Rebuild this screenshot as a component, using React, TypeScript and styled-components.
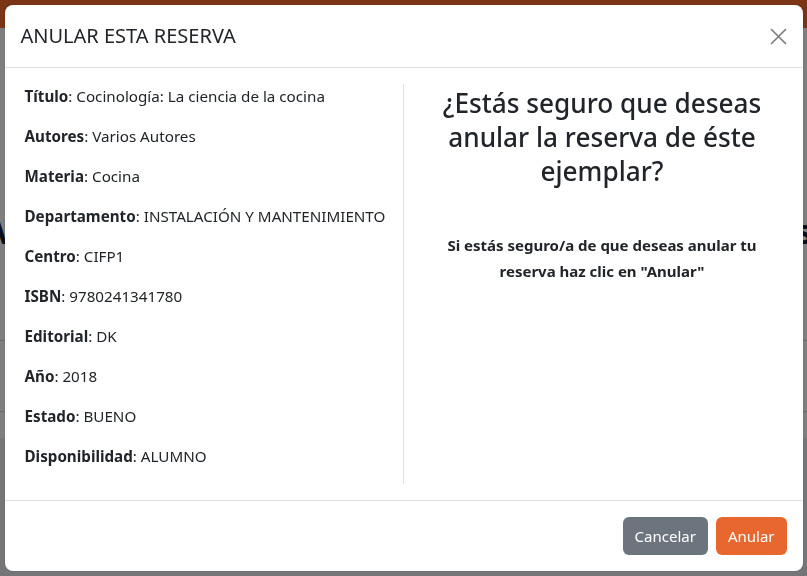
import React from "react";
import styled, { createGlobalStyle } from "styled-components";

const GlobalStyle = createGlobalStyle`
  html, body {
    margin: 0;
    height: 100%;
  }
  body {
    font-family: "Noto Sans", "Open Sans", sans-serif;
    color: #212529;
    background: #ffffff;
    overflow: hidden;
  }
`;

const Page = styled.div`
  height: 576px;
  display: flex;
  flex-direction: column;
`;

const NavBar = styled.div`
  height: 28px;
  background: #f4682c;
`;

const PageBody = styled.div`
  flex: 1;
  display: flex;
  flex-direction: column;
  padding: 180px 0 0;
`;

const PageTitle = styled.div`
  display: flex;
  justify-content: space-between;
  font-size: 34px;
  font-weight: 700;
  color: #0e1b36;
  margin: 0 -6px;
`;

const PageLine = styled.div<{ $top: number }>`
  margin-top: ${(p) => p.$top}px;
  border-top: 1px solid #d0d4d8;
`;

const PageFooter = styled.div`
  margin-top: auto;
  height: 138px;
  background: #e9ecef;
`;

const Backdrop = styled.div`
  position: fixed;
  inset: 0;
  background: rgba(0, 0, 0, 0.5);
  display: flex;
  justify-content: center;
  align-items: flex-start;
  padding-top: 5px;
`;

const Modal = styled.div`
  width: 798px;
  background: #ffffff;
  border-radius: 8px;
  display: flex;
  flex-direction: column;
  box-shadow: 0 0 2px rgba(0, 0, 0, 0.2);
`;

const Header = styled.div`
  display: flex;
  align-items: center;
  justify-content: space-between;
  padding: 16px;
  border-bottom: 1px solid #dee2e6;
`;

const Title = styled.h5`
  margin: 0;
  font-size: 20px;
  line-height: 30px;
  font-weight: 400;
`;

const CloseButton = styled.button`
  width: 24px;
  height: 24px;
  padding: 0;
  border: none;
  background: transparent;
  display: flex;
  align-items: center;
  justify-content: center;
  margin-right: -4px;
  cursor: pointer;
`;

const Body = styled.div`
  padding: 16px;
  display: grid;
  grid-template-columns: 1fr 1fr;
`;

const InfoColumn = styled.div`
  border-right: 1px solid #dee2e6;
  padding-left: 4px;
`;

const InfoRow = styled.p`
  margin: 0 0 16px;
  font-size: 15.2px;
  line-height: 24px;
  white-space: nowrap;
`;

const Label = styled.b`
  font-weight: 700;
`;

const ConfirmColumn = styled.div`
  text-align: center;
  padding: 0 12px 0 26px;
`;

const Question = styled.h2`
  margin: 2px 0 0;
  font-size: 26.2px;
  line-height: 34px;
  font-weight: 500;
`;

const Hint = styled.p`
  margin: 44px 0 0;
  font-size: 15px;
  line-height: 26px;
  font-weight: 700;
`;

const Footer = styled.div`
  display: flex;
  justify-content: flex-end;
  gap: 8px;
  padding: 16px;
  border-top: 1px solid #dee2e6;
`;

const Button = styled.button<{ $variant: "secondary" | "danger" }>`
  height: 38px;
  padding: 0 12px;
  border: none;
  border-radius: 6px;
  font-family: inherit;
  font-size: 15px;
  color: #ffffff;
  background: ${(p) => (p.$variant === "secondary" ? "#6c757d" : "#e7672f")};
  cursor: pointer;
`;

const book: [string, string][] = [
  ["Título", "Cocinología: La ciencia de la cocina"],
  ["Autores", "Varios Autores"],
  ["Materia", "Cocina"],
  ["Departamento", "INSTALACIÓN Y MANTENIMIENTO"],
  ["Centro", "CIFP1"],
  ["ISBN", "9780241341780"],
  ["Editorial", "DK"],
  ["Año", "2018"],
  ["Estado", "BUENO"],
  ["Disponibilidad", "ALUMNO"],
];

export default function App() {
  return (
    <>
      <GlobalStyle />
      <Page>
        <NavBar />
        <PageBody>
          <PageTitle>
            <span>V</span>
            <span>s</span>
          </PageTitle>
          <PageLine $top={86} />
          <PageLine $top={70} />
          <PageFooter />
        </PageBody>
      </Page>
      <Backdrop>
        <Modal>
          <Header>
            <Title>ANULAR ESTA RESERVA</Title>
            <CloseButton aria-label="Cerrar">
              <svg width="17" height="17" viewBox="0 0 17 17">
                <path
                  d="M1 1 L16 16 M16 1 L1 16"
                  stroke="#7b7b7b"
                  strokeWidth="1.6"
                  fill="none"
                />
              </svg>
            </CloseButton>
          </Header>
          <Body>
            <InfoColumn>
              {book.map(([label, value]) => (
                <InfoRow key={label}>
                  <Label>{label}</Label>: {value}
                </InfoRow>
              ))}
            </InfoColumn>
            <ConfirmColumn>
              <Question>¿Estás seguro que deseas anular la reserva de éste ejemplar?</Question>
              <Hint>
                Si estás seguro/a de que deseas anular tu reserva haz clic en "Anular"
              </Hint>
            </ConfirmColumn>
          </Body>
          <Footer>
            <Button $variant="secondary">Cancelar</Button>
            <Button $variant="danger">Anular</Button>
          </Footer>
        </Modal>
      </Backdrop>
    </>
  );
}
